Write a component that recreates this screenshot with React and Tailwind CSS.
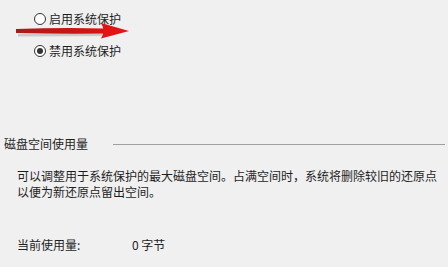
import React from 'react';

const Radio = ({ checked, label }) => (
  <label className="flex items-center h-[20px]">
    <span className="w-[12px] h-[12px] rounded-full border border-[#333333] bg-white flex items-center justify-center">
      {checked && <span className="w-[6px] h-[6px] rounded-full bg-[#333333]" />}
    </span>
    <span className="ml-[3px] text-[12px] text-[#1e1e1e]">{label}</span>
  </label>
);

export default function App() {
  return (
    <div
      className="relative w-[448px] h-[267px] bg-[#f0f0f0] overflow-hidden text-[#1e1e1e]"
      style={{ fontFamily: '"Noto Sans CJK SC", "Noto Sans", sans-serif' }}
    >
      {/* radios */}
      <div className="pl-[34px] pt-[9px] flex flex-col gap-[12px]">
        <Radio label="启用系统保护" />
        <Radio checked label="禁用系统保护" />
      </div>

      {/* red annotation arrow */}
      <svg className="absolute left-[12px] top-[20px]" width="124" height="22" viewBox="0 0 124 22">
        <defs>
          <linearGradient id="shaft" x1="0" x2="1" y1="0" y2="0">
            <stop offset="0" stopColor="#a81a1a" />
            <stop offset="1" stopColor="#dc1212" />
          </linearGradient>
        </defs>
        <path d="M5 12 L94 10.5 L94 14 L5 14.5 Z" fill="#777" opacity="0.3" transform="translate(1 2)" />
        <path d="M4 9 Q50 7.5 92 8.5 L92 13.5 Q50 14 4 13 Z" fill="url(#shaft)" />
        <path d="M89 3 L117 11 L89 18.5 Q94 11 89 3 Z" fill="#e21414" />
      </svg>

      {/* disk usage section */}
      <div className="mt-[76px] pl-[4px] pr-[3px] flex items-center h-[14px]">
        <span className="text-[12px] leading-[14px] w-[109px]">磁盘空间使用量</span>
        <div className="flex-1 h-px bg-[#a0a0a0]" />
      </div>
      <p className="mt-[17px] pl-[17px] pr-[6px] text-[12px] leading-[16px]">
        可以调整用于系统保护的最大磁盘空间。占满空间时，系统将删除较旧的还原点以便为新还原点留出空间。
      </p>
      <div className="mt-[38px] pl-[17px] flex text-[12px] leading-[14px]">
        <span className="w-[115px]">当前使用量:</span>
        <span>0 字节</span>
      </div>
    </div>
  );
}
